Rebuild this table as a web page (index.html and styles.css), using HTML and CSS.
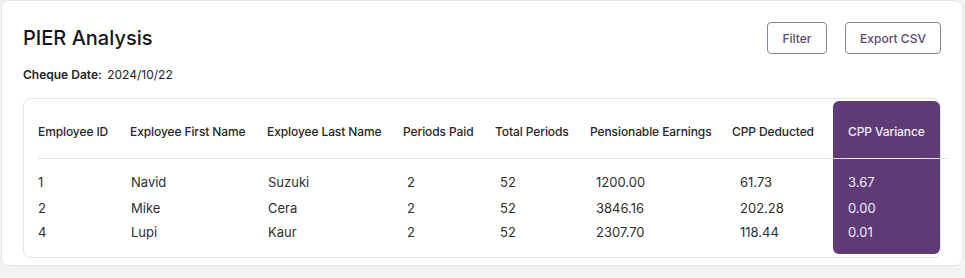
FILE: index.html
```html
<!DOCTYPE html>
<html>
<head>
<meta charset="utf-8">
<link rel="stylesheet" href="styles.css">
</head>
<body>
<div class="card">
  <div class="head">
    <h1 class="title">PIER Analysis</h1>
    <div class="actions">
      <button class="btn btn-filter">Filter</button>
      <button class="btn btn-export">Export CSV</button>
    </div>
  </div>
  <div class="date"><span class="date-label">Cheque Date:</span> 2024/10/22</div>
  <div class="table-card">
    <div class="grid">
      <div class="hl"></div>
      <div class="th c1">Employee ID</div>
      <div class="th c2">Exployee First Name</div>
      <div class="th c3">Exployee Last Name</div>
      <div class="th c4">Periods Paid</div>
      <div class="th c5">Total Periods</div>
      <div class="th c6">Pensionable Earnings</div>
      <div class="th c7">CPP Deducted</div>
      <div class="th th-hi c8">CPP Variance</div>
      <div class="sep"></div>
      <div class="hl-line"></div>

      <div class="td d1 r1">1</div>
      <div class="td d2 r1">Navid</div>
      <div class="td d3 r1">Suzuki</div>
      <div class="td d4 r1">2</div>
      <div class="td d5 r1">52</div>
      <div class="td d6 r1">1200.00</div>
      <div class="td d7 r1">61.73</div>
      <div class="td d8 r1">3.67</div>

      <div class="td d1 r2">2</div>
      <div class="td d2 r2">Mike</div>
      <div class="td d3 r2">Cera</div>
      <div class="td d4 r2">2</div>
      <div class="td d5 r2">52</div>
      <div class="td d6 r2">3846.16</div>
      <div class="td d7 r2">202.28</div>
      <div class="td d8 r2">0.00</div>

      <div class="td d1 r3">4</div>
      <div class="td d2 r3">Lupi</div>
      <div class="td d3 r3">Kaur</div>
      <div class="td d4 r3">2</div>
      <div class="td d5 r3">52</div>
      <div class="td d6 r3">2307.70</div>
      <div class="td d7 r3">118.44</div>
      <div class="td d8 r3">0.01</div>
    </div>
  </div>
</div>
</body>
</html>
```

FILE: styles.css
```css
* { box-sizing: border-box; }
html, body { margin: 0; padding: 0; }
body {
  background: #f3f3f3;
  font-family: Inter, "Liberation Sans", sans-serif;
  color: #1c1c1c;
  width: 965px;
  height: 278px;
  overflow: hidden;
}
.card {
  margin: 0 2px 0 1px;
  height: 266px;
  background: #fff;
  border: 1px solid #e6e6e6;
  border-radius: 8px;
  padding: 21px 21px 0 21px;
}
.head {
  display: flex;
  align-items: center;
  justify-content: space-between;
  height: 32px;
}
.title {
  margin: 0;
  font-size: 20px;
  font-weight: 500;
  line-height: 24px;
  color: #161616;
}
.actions {
  display: flex;
  gap: 18px;
}
.btn {
  font-family: inherit;
  font-size: 12px;
  font-weight: 500;
  color: #5c4a6c;
  background: #fff;
  border: 1px solid #8d8296;
  border-radius: 4px;
  height: 32px;
  padding: 0;
}
.btn-filter { width: 60px; }
.btn-export { width: 96px; }
.date {
  margin-top: 13px;
  font-size: 12px;
  line-height: 16px;
  color: #222;
}
.date-label { font-weight: 600; margin-right: 2px; }
.table-card {
  margin-top: 15px;
  border: 1px solid #e3e3e3;
  border-radius: 8px;
  height: 160px;
  padding: 2px 0 0 14px;
}
.grid {
  display: grid;
  grid-template-columns: 92px 137px 136px 92px 95px 142px 101px 107px 8px;
  grid-template-rows: 57px 1px 36px 25px 34px;
  width: 910px;
}
.hl {
  grid-column: 8;
  grid-row: 1 / 6;
  background: #5f3b76;
  border-radius: 6px;
}
.th {
  grid-row: 1;
  font-size: 12px;
  font-weight: 500;
  letter-spacing: -0.1px;
  color: #262626;
  display: flex;
  align-items: center;
  padding-top: 3px;
  white-space: nowrap;
  position: relative;
}
.th-hi {
  color: #f3ecf7;
  padding-left: 15px;
}
.sep {
  grid-row: 2;
  grid-column: 1 / 10;
  background: #e4e4e4;
}
.hl-line {
  grid-row: 2;
  grid-column: 8;
  margin: 0 16px 0 15px;
  background: #f3ecf7;
  position: relative;
}
.td {
  font-size: 13px;
  color: #2e2e2e;
  display: flex;
  white-space: nowrap;
  position: relative;
}
.r1 { grid-row: 3; align-items: flex-end; padding-bottom: 5px; }
.r2 { grid-row: 4; align-items: center; }
.r3 { grid-row: 5; align-items: flex-start; padding-top: 4px; }
.c1, .d1 { grid-column: 1; }
.c2 { grid-column: 2; }
.c3 { grid-column: 3; }
.c4 { grid-column: 4; }
.c5 { grid-column: 5; }
.c6 { grid-column: 6; }
.c7 { grid-column: 7; }
.c8 { grid-column: 8; }
.d2 { grid-column: 2; padding-left: 1px; }
.d3 { grid-column: 3; padding-left: 1px; }
.d4 { grid-column: 4; padding-left: 4px; }
.d5 { grid-column: 5; padding-left: 5px; }
.d6 { grid-column: 6; padding-left: 6px; }
.d7 { grid-column: 7; padding-left: 8px; }
.d8 { grid-column: 8; padding-left: 15px; color: #f3ecf7; }
```
